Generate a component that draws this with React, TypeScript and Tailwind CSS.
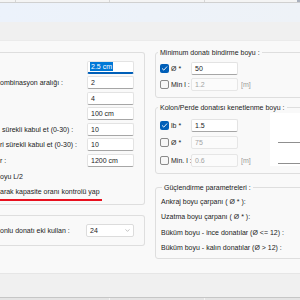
import { ChevronDown } from "lucide-react";

type FieldProps = {
  value: string;
  disabled?: boolean;
  focused?: boolean;
  w?: string;
};

function Field({ value, disabled, focused }: FieldProps) {
  if (focused) {
    return (
      <div className="w-[47px] h-[13px] shrink-0 bg-white border border-[#e3e3e3] border-b-2 border-b-[#005fb8] rounded-[2px] flex items-center px-[2px]">
        <span className="bg-[#0078d7] text-white leading-[9px] px-[1px]">{value}</span>
      </div>
    );
  }
  return (
    <div
      className={`w-[47px] h-[13px] shrink-0 border rounded-[2px] flex items-center px-[3px] ${
        disabled
          ? "bg-[#fbfbfb] border-[#e6e6e6] text-[#a3a3a3]"
          : "bg-white border-[#e3e3e3] border-b-[#a6a6a6] text-[#1b1b1b]"
      }`}
    >
      {value}
    </div>
  );
}

function Check({ checked }: { checked?: boolean }) {
  if (checked) {
    return (
      <div className="w-[9px] h-[9px] shrink-0 rounded-[2px] bg-[#005fb8] flex items-center justify-center">
        <svg width="7" height="7" viewBox="0 0 10 10" fill="none">
          <path d="M1.8 5.2 4 7.3 8.3 2.6" stroke="white" strokeWidth="1.3" strokeLinecap="round" strokeLinejoin="round" />
        </svg>
      </div>
    );
  }
  return <div className="w-[9px] h-[9px] shrink-0 rounded-[2px] border border-[#8a8a8a] bg-[#f7f7f7]" />;
}

function OptionRow({ checked, label, value, disabled, unit }: { checked?: boolean; label: string; value: string; disabled?: boolean; unit?: boolean }) {
  return (
    <div className="flex items-center h-[13px]">
      <Check checked={checked} />
      <span className="ml-[2px] w-[20px] shrink-0 whitespace-nowrap">{label}</span>
      <Field value={value} disabled={disabled} />
      {unit && <span className="ml-[3px] text-[#9c9c9c]">[m]</span>}
    </div>
  );
}

const leftRows = [
  { label: "", value: "2.5 cm", focused: true },
  { label: "ombinasyon aralığı :", value: "2" },
  { label: "", value: "4" },
  { label: "", value: "100 cm" },
  { label: "sürekli kabul et (0-30) :", value: "10", indent: true },
  { label: "ri sürekli kabul et (0-30) :", value: "10" },
  { label: "r :", value: "1200 cm" },
];

const strengthening = [
  "Ankraj boyu çarpanı ( Ø * ):",
  "Uzatma boyu çarpanı ( Ø * ):",
  "Büküm boyu - ince donatılar (Ø <= 12) :",
  "Büküm boyu - kalın donatılar (Ø > 12) :",
];

export default function App() {
  return (
    <div className="w-[300px] h-[300px] overflow-hidden flex flex-col bg-[#f9f9f9] text-[7px] leading-[9px] text-[#1b1b1b] font-['Liberation_Sans',Arial,sans-serif]">
      {/* grid header strip */}
      <div className="h-[3px] shrink-0 flex bg-[#f4f4f4] border-b border-[#d0d0d0]">
        <div className="w-[16px] border-r border-[#d6d6d6]" />
        <div className="w-[94px] border-r border-[#d6d6d6]" />
        <div className="w-[95px] border-r border-[#d6d6d6]" />
        <div className="flex-1" />
        <div className="w-[3px] bg-[#a9b0bd]" />
      </div>
      <div className="h-[19px] shrink-0 bg-gradient-to-r from-[#ecf2fb] to-[#eef2f7]" />
      <div className="h-[18px] shrink-0 bg-[#f0f0f0]" />

      <div className="h-[233px] shrink-0 flex bg-[#f9f9f9] border-t border-[#ebebeb]">
        {/* left column */}
        <div className="w-[145px] shrink-0 flex flex-col pt-[11px]">
          <div className="border border-l-0 border-[#dedede] rounded-r-[3px] pt-[7.5px] pb-[3px] pr-[10px]">
            <div className="flex flex-col gap-[2.5px]">
              {leftRows.map((row, i) => (
                <div key={i} className="flex items-center h-[13px]">
                  <span className={`whitespace-nowrap ${row.indent ? "pl-[2px]" : ""}`}>{row.label}</span>
                  <div className="ml-auto">
                    <Field value={row.value} focused={row.focused} />
                  </div>
                </div>
              ))}
            </div>
            <div className="mt-[5px] whitespace-nowrap">oyu L/2</div>
            <div className="mt-[6.5px] whitespace-nowrap">arak kapasite oranı kontrolü yap</div>
            <div className="mt-[2.5px] h-[2px] w-[102px] bg-[#e8101e]" />
          </div>

          <div className="mt-[10px] border border-l-0 border-[#dedede] rounded-r-[3px] h-[31px] flex items-center pr-[10px]">
            <span className="whitespace-nowrap">onlu donatı eki kullan :</span>
            <div className="ml-auto w-[48px] h-[13px] bg-white border border-[#dcdcdc] rounded-[2px] flex items-center pl-[3px] pr-[2px]">
              <span>24</span>
              <ChevronDown className="ml-auto text-[#777]" size={7} strokeWidth={1.5} />
            </div>
          </div>
        </div>

        {/* right column */}
        <div className="ml-[10px] w-[175px] shrink-0 flex flex-col pt-[7px]">
          <fieldset className="border border-[#dedede] rounded-[3px] px-[4px] pt-[5px] pb-[6px]">
            <legend className="-ml-[2px] px-[2px] leading-[9px] whitespace-nowrap">Minimum donatı bindirme boyu :</legend>
            <div className="flex flex-col gap-[2.5px]">
              <OptionRow checked label="Ø *" value="50" />
              <OptionRow label="Min l :" value="1.2" disabled unit />
            </div>
          </fieldset>

          <fieldset className="mt-[5px] border border-[#dedede] rounded-[3px] px-[4px] pb-[6px]">
            <legend className="-ml-[2px] px-[2px] leading-[9px] whitespace-nowrap">Kolon/Perde donatısı kenetlenme boyu :</legend>
            <div className="flex items-start">
              <div className="w-[110px] shrink-0 flex flex-col gap-[4.3px] pt-[7.5px]">
                <OptionRow checked label="lb *" value="1.5" />
                <OptionRow label="Ø *" value="75" disabled />
                <OptionRow label="Min. l :" value="0.6" disabled unit />
              </div>
              <div className="mt-[1.5px] h-[53px] flex-1 bg-white flex flex-col pl-[8px]">
                <div className="mt-[29px] h-px bg-[#8f8f8f]" />
                <div className="mt-[20px] h-px bg-[#8f8f8f]" />
              </div>
            </div>
          </fieldset>

          <fieldset className="mt-[9px] border border-[#dedede] rounded-[3px] px-[5px] pt-[5px] pb-[6px]">
            <legend className="ml-[1px] px-[2px] leading-[9px] whitespace-nowrap">Güçlendirme parametreleri :</legend>
            <div className="flex flex-col gap-[6.6px]">
              {strengthening.map((t) => (
                <div key={t} className="whitespace-nowrap">{t}</div>
              ))}
            </div>
          </fieldset>
        </div>
      </div>

      <div className="h-[24px] shrink-0 bg-[#f0f0f0] border-t border-[#e6e6e6]" />
      <div className="h-[3px] shrink-0 flex bg-[#e4e4e4] border-t border-[#c6c6c6]">
        <div className="w-[110px] border-r border-[#f4f4f4]" />
        <div className="w-[95px] border-r border-[#f4f4f4]" />
        <div className="flex-1" />
      </div>
    </div>
  );
}
